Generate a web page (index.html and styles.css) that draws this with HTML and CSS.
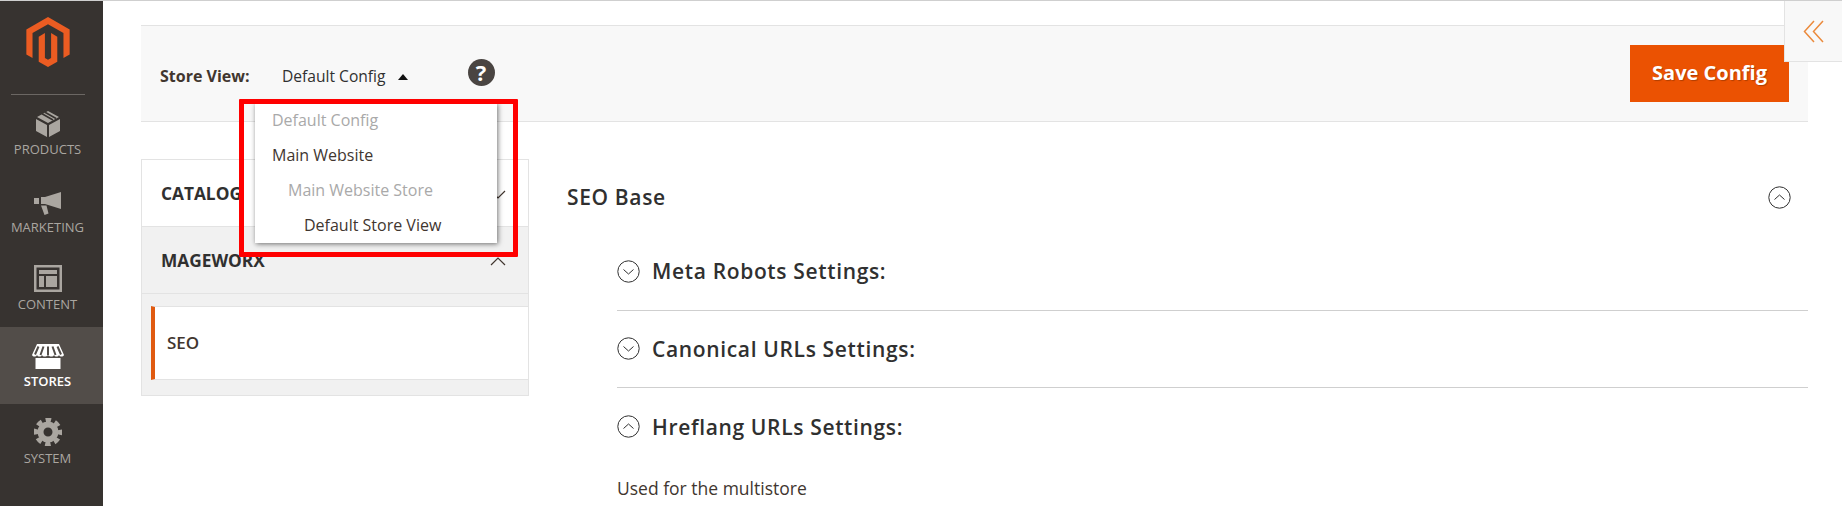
FILE: index.html
```html
<!DOCTYPE html>
<html lang="en">
<head>
<meta charset="utf-8">
<title>Configuration</title>
<link rel="stylesheet" href="styles.css">
</head>
<body>
<aside class="nav">
  <div class="logo">
    <svg width="44" height="50" viewBox="1.6 0 20.8 24"><path fill="#eb5c22" d="M12 24l-4.455-2.572v-12l2.97-1.715v12.001L12 20.573l1.485-.859V7.713l2.97 1.715v12L12 24zM22.391 6v12l-2.969 1.714V7.713L12 3.43 4.574 7.713v12.001L1.609 18V6L12 0l10.391 6z"/></svg>
  </div>
  <a class="nav-item">
    <svg width="24" height="26" viewBox="0 0 24 26"><path fill="#aaa6a0" d="M12 0l11 6-11 6L1 6zM0 8l11 6v12L0 20zM24 8l-11 6v12l11-6z"/><path stroke="#373330" stroke-width="1.6" fill="none" d="M6 2.800l11 6.200M9 1.300l11 6.200"/></svg>
    <span>Products</span>
  </a>
  <a class="nav-item">
    <svg width="28" height="24" viewBox="0 0 28 24"><path fill="#aaa6a0" d="M27 1v17L11 13H7V6h4zM0 7h5v6H0zM7 14.500h5.500l2 8-4 1.500z"/></svg>
    <span>Marketing</span>
  </a>
  <a class="nav-item">
    <svg width="28" height="27" viewBox="0 0 28 27"><path fill="#aaa6a0" fill-rule="evenodd" d="M0 0h28v27H0zM2.500 2.500v22h23v-22zM5 5h18v4H5zM5 11h5v11H5zM12 11h11v11H12z"/></svg>
    <span>Content</span>
  </a>
  <a class="nav-item active">
    <svg width="32" height="25" viewBox="0 0 32 25"><path fill="#fff" d="M3.500 14h25v11h-25z"/><path fill="#fff" d="M5 0h22l5 11c-1 2-4 2-5 0-1 2-4 2-5 0-1 2-4 2-6 0-2 2-5 2-6 0-1 2-4 2-5 0-1 2-4 2-5 0z"/><path stroke="#524d49" stroke-width="2" fill="none" d="M11.500 2.500l-3 8.500M16 2.500V11M20.500 2.500l3 8.500M6.500 2.500l-3.500 8M25.500 2.500l3.500 8"/></svg>
    <span>Stores</span>
  </a>
  <a class="nav-item">
    <svg width="28" height="28" viewBox="0 0 28 28"><circle cx="14" cy="14" r="7.500" fill="none" stroke="#aaa6a0" stroke-width="6"/><circle cx="14" cy="14" r="12" fill="none" stroke="#aaa6a0" stroke-width="4.500" stroke-dasharray="5.420 4" stroke-dashoffset="2.700"/></svg>
    <span>System</span>
  </a>
</aside>

<main class="main">
  <button class="collapse" aria-label="Collapse">
    <svg width="21" height="23" viewBox="0 0 21 23"><path fill="none" stroke="#eb8a3c" stroke-width="1.500" d="M11 1L1.500 11.500 11 22M20 1l-9.500 10.500L20 22"/></svg>
  </button>

  <header class="toolbar">
    <div class="scope">
      <span class="scope-label">Store View:</span>
      <span class="scope-value">Default Config</span>
      <span class="caret"></span>
      <span class="help">?</span>
      <div class="menu">
        <div class="menu-item muted">Default Config</div>
        <div class="menu-item">Main Website</div>
        <div class="menu-item muted lvl1">Main Website Store</div>
        <div class="menu-item lvl2">Default Store View</div>
      </div>
      <div class="highlight"></div>
    </div>
    <button class="save">Save Config</button>
  </header>

  <div class="columns">
    <section class="tabs">
      <div class="tab-head white">
        <span>CATALOG</span>
        <svg class="chev" width="16" height="9" viewBox="0 0 16 9"><path fill="none" stroke="#41362f" stroke-width="1.200" d="M1 1l7 7 7-7"/></svg>
      </div>
      <div class="tab-head">
        <span>MAGEWORX</span>
        <svg class="chev" width="16" height="9" viewBox="0 0 16 9"><path fill="none" stroke="#41362f" stroke-width="1.200" d="M1 8l7-7 7 7"/></svg>
      </div>
      <div class="tab-body">
        <div class="tab-link">SEO</div>
      </div>
    </section>

    <section class="content">
      <div class="section-head">
        <h2>SEO Base</h2>
        <svg class="circle" width="23" height="23" viewBox="0 0 23 23"><circle cx="11.500" cy="11.500" r="10.700" fill="none" stroke="#303030" stroke-width="1"/><path fill="none" stroke="#303030" d="M6.500 13.500l5-4.500 5 4.500"/></svg>
      </div>
      <div class="group">
        <div class="group-row">
          <svg class="circle" width="23" height="23" viewBox="0 0 23 23"><circle cx="11.500" cy="11.500" r="10.700" fill="none" stroke="#303030" stroke-width="1"/><path fill="none" stroke="#303030" d="M6.500 9.500l5 4.500 5-4.500"/></svg>
          <h3>Meta Robots Settings:</h3>
        </div>
        <div class="group-row">
          <svg class="circle" width="23" height="23" viewBox="0 0 23 23"><circle cx="11.500" cy="11.500" r="10.700" fill="none" stroke="#303030" stroke-width="1"/><path fill="none" stroke="#303030" d="M6.500 9.500l5 4.500 5-4.500"/></svg>
          <h3>Canonical URLs Settings:</h3>
        </div>
        <div class="group-row open">
          <svg class="circle" width="23" height="23" viewBox="0 0 23 23"><circle cx="11.500" cy="11.500" r="10.700" fill="none" stroke="#303030" stroke-width="1"/><path fill="none" stroke="#303030" d="M6.500 13.500l5-4.500 5 4.500"/></svg>
          <h3>Hreflang URLs Settings:</h3>
        </div>
        <p class="note">Used for the multistore</p>
      </div>
    </section>
  </div>
</main>
</body>
</html>
```
FILE: styles.css
```css
* { box-sizing: border-box; }
html, body { margin: 0; height: 100%; }
body {
  display: flex;
  height: 506px;
  overflow: hidden;
  border-top: 1px solid #cfcfcf;
  background: #fff;
  font-family: "Open Sans", sans-serif;
  color: #41362f;
}

/* Left navigation */
.nav {
  width: 103px;
  flex: none;
  background: #373330;
  display: flex;
  flex-direction: column;
}
.logo {
  height: 94px;
  margin: 0 18px 0 11px;
  padding: 16px 0 0 15px;
  border-bottom: 1px solid #6b6763;
}
.nav-item {
  height: 77.300px;
  display: flex;
  flex-direction: column;
  align-items: center;
  justify-content: flex-end;
  padding: 0 8px 14px 0;
  gap: 3px;
  font-size: 13px;
  line-height: 18px;
  text-transform: uppercase;
  color: #aaa6a0;
}
.nav-item.active { background: #524d49; color: #fff; font-weight: 600; }

/* Main */
.main {
  position: relative;
  flex: 1;
  min-width: 0;
  padding: 24px 34px 0 38px;
}
.collapse {
  position: absolute;
  top: 0;
  right: 0;
  width: 58px;
  height: 61px;
  padding: 0;
  border: 0;
  border-left: 1px solid #e3e3e3;
  border-bottom: 1px solid #e3e3e3;
  background: #f8f8f8;
  display: flex;
  align-items: center;
  justify-content: center;
}
.toolbar {
  height: 97px;
  display: flex;
  align-items: center;
  justify-content: space-between;
  padding: 0 19px 0 19px;
  background: #f8f8f8;
  border-top: 1px solid #e3e3e3;
  border-bottom: 1px solid #e3e3e3;
}
.scope {
  position: relative;
  display: flex;
  align-items: center;
  height: 40px;
  margin-top: 4px;
  font-size: 15.600px;
}
.scope-label { font-weight: 700; font-size: 16px; width: 122px; color: #41362f; }
.scope-value { color: #303030; }
.caret {
  width: 0;
  height: 0;
  margin: 2px 0 0 12px;
  border-left: 5px solid transparent;
  border-right: 5px solid transparent;
  border-bottom: 6px solid #111;
}
.help {
  width: 27px;
  height: 27px;
  margin: -7px 0 0 60px;
  border-radius: 50%;
  background: #4a4542;
  color: #fff;
  font-size: 22px;
  font-weight: 700;
  line-height: 27px;
  text-align: center;
}
.menu {
  position: absolute;
  left: 95px;
  top: 47px;
  width: 242px;
  height: 140px;
  padding: 0 17px;
  background: #fff;
  box-shadow: 1px 1px 5px rgba(0, 0, 0, .55);
  z-index: 2;
}
.menu-item {
  height: 35px;
  line-height: 35px;
  font-size: 16px;
  white-space: nowrap;
  color: #41362f;
}
.menu-item.muted { color: #a9a9a9; }
.menu-item.lvl1 { padding-left: 16px; }
.menu-item.lvl2 { padding-left: 32px; }
.highlight {
  position: absolute;
  left: 79px;
  top: 43px;
  width: 279px;
  height: 158px;
  border: 5px solid #f00;
  border-radius: 1px;
  z-index: 3;
}
.save {
  width: 159px;
  height: 57px;
  padding: 0 0 2px;
  border: 0;
  background: #eb5202;
  color: #fff;
  font-family: inherit;
  font-size: 20px;
  font-weight: 700;
  text-shadow: 1px 1px 1px rgba(0, 0, 0, .25);
}

.columns {
  display: flex;
  gap: 38px;
  margin-top: 37px;
}

/* Tabs */
.tabs {
  width: 388px;
  flex: none;
  height: 237px;
  border: 1px solid #e3e3e3;
  background: #f1f1f1;
}
.tab-head {
  height: 67px;
  display: flex;
  align-items: center;
  justify-content: space-between;
  padding: 1px 22px 0 19px;
  font-size: 17.300px;
  font-weight: 700;
  border-bottom: 1px solid #e3e3e3;
  color: #303030;
}
.tab-head.white { background: #fff; }
.chev { margin-top: 2px; }
.tab-body { padding: 12px 0 0 9px; }
.tab-link {
  height: 74px;
  padding-left: 12px;
  background: #fff;
  border-left: 4px solid #e05a10;
  border-top: 1px solid #e3e3e3;
  border-bottom: 1px solid #e3e3e3;
  font-size: 17px;
  font-weight: 600;
  line-height: 72px;
  color: #41362f;
}

/* Content */
.content { flex: 1; min-width: 0; }
.section-head {
  height: 46px;
  margin-top: 15px;
  display: flex;
  align-items: center;
  justify-content: space-between;
  padding-right: 17px;
}
.section-head h2, .group-row h3 {
  margin: 0;
  font-size: 21px;
  font-weight: 600;
  letter-spacing: .65px;
  color: #303030;
}
.group { margin: 13px 0 0 50px; }
.group-row {
  height: 77.500px;
  display: flex;
  align-items: center;
  gap: 12px;
  border-bottom: 1px solid #cfcfcf;
}
.group-row.open { border-bottom: 0; }
.note {
  margin: 10px 0 0;
  font-size: 17.500px;
  color: #41362f;
}
.circle { flex: none; }
```
